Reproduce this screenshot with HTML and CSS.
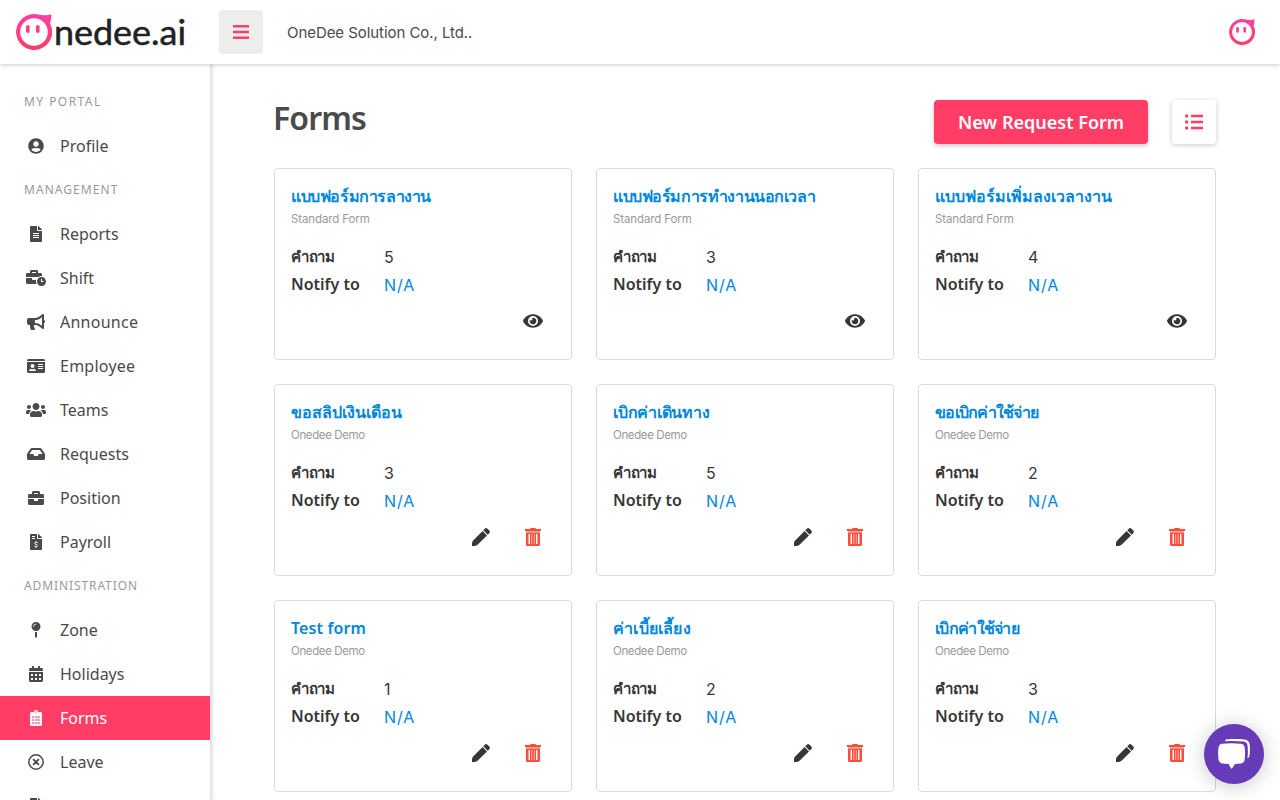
FILE: index.html
```html
<!DOCTYPE html>
<html lang="th">
<head>
<meta charset="utf-8">
<title>Forms</title>
<link rel="stylesheet" href="styles.css">
</head>
<body>
<svg class="defs" width="0" height="0">
<defs>
<linearGradient id="pink" x1="0" y1="0" x2="0" y2="1"><stop offset="0" stop-color="#ff3ea5"/><stop offset="1" stop-color="#ff3e62"/></linearGradient>
<symbol id="face" viewBox="0 0 36 36"><path fill="url(#pink)" fill-rule="evenodd" d="M18 0C22.500 0 25 1.300 28 1.300Q32 1.400 35.200.3Q35.600 5 34 9.500A18 18 0 1 1 18 0ZM18 4.200A13.800 13.800 0 1 0 18 31.800A13.800 13.800 0 1 0 18 4.200Z"/><rect x="10" y="11" width="3.600" height="8" rx="1.800" fill="#ff3e85"/><rect x="20" y="11" width="3.600" height="8" rx="1.800" fill="#ff3e85"/></symbol>
<symbol id="user" viewBox="0 0 496 512"><path d="M248 8C111 8 0 119 0 256s111 248 248 248 248-111 248-248S385 8 248 8zm0 96c48.600 0 88 39.400 88 88s-39.400 88-88 88-88-39.400-88-88 39.400-88 88-88zm0 344c-58.700 0-111.300-26.600-146.500-68.200 18.800-35.400 55.600-59.800 98.500-59.800 2.400 0 4.800.4 7.100 1.100 13 4.200 26.600 6.900 40.900 6.900 14.300 0 28-2.700 40.900-6.900 2.300-.7 4.700-1.100 7.100-1.100 42.900 0 79.700 24.400 98.500 59.800C359.300 421.400 306.700 448 248 448z"/></symbol>
<symbol id="file" viewBox="0 0 384 512"><path fill-rule="evenodd" d="M224 136V0H24C10.700 0 0 10.700 0 24v464c0 13.300 10.700 24 24 24h336c13.300 0 24-10.700 24-24V160H248c-13.200 0-24-10.800-24-24zM96 224h192v32H96zM96 288h192v32H96zM96 352h192v32H96zM384 121.900v6.100H256V0h6.100c6.400 0 12.500 2.500 17 7l97.900 98c4.500 4.500 7 10.600 7 16.900z"/></symbol>
<symbol id="shift" viewBox="0 0 640 512"><path d="M496 224c-79.590 0-144 64.410-144 144s64.410 144 144 144 144-64.410 144-144-64.410-144-144-144zm64 150.290c0 5.340-4.370 9.710-9.710 9.710h-60.570c-5.340 0-9.710-4.370-9.710-9.710v-76.570c0-5.340 4.370-9.710 9.710-9.710h12.570c5.340 0 9.710 4.370 9.710 9.710V352h38.290c5.340 0 9.710 4.370 9.710 9.710v12.580zM496 192c5.400 0 10.720.33 16 .81V144c0-25.600-22.400-48-48-48h-80V48c0-25.600-22.400-48-48-48H176c-25.600 0-48 22.400-48 48v48H48c-25.600 0-48 22.400-48 48v80h395.120c28.600-20.090 63.350-32 100.880-32zM320 96H192V64h128v32zm6.820 224H208c-8.840 0-16-7.160-16-16v-48H0v144c0 25.600 22.400 48 48 48h291.430C327.100 423.960 320 396.820 320 368c0-16.660 2.480-32.720 6.820-48z"/></symbol>
<symbol id="horn" viewBox="0 0 576 512"><path d="M576 240c0-23.630-12.950-44.040-32-55.120V32.010C544 23.260 537.020 0 512 0c-7.120 0-14.190 2.380-19.980 7.020l-85.030 68.030C364.280 109.190 310.660 128 256 128H64c-35.350 0-64 28.650-64 64v96c0 35.350 28.650 64 64 64h33.700c-1.390 10.480-2.180 21.140-2.180 32 0 39.770 9.260 77.350 25.560 110.940 5.190 10.690 16.520 17.060 28.400 17.060h74.280c26.050 0 41.690-29.840 25.900-50.560-16.400-21.520-26.150-48.360-26.150-77.440 0-11.110 1.620-21.790 4.410-32H256c54.660 0 108.280 18.810 150.980 52.950l85.030 68.030a32.023 32.023 0 0 0 19.980 7.020c24.920 0 32-22.780 32-32V295.130C563.050 284.040 576 263.630 576 240zm-96 141.420l-33.050-26.440C392.950 311.780 325.120 288 256 288v-96c69.120 0 136.950-23.780 190.950-66.980L480 98.580v282.840z"/></symbol>
<symbol id="card" viewBox="0 0 576 512"><path fill-rule="evenodd" d="M528 32H48C21.500 32 0 53.500 0 80v16h576V80c0-26.500-21.500-48-48-48zM0 432c0 26.500 21.500 48 48 48h480c26.500 0 48-21.500 48-48V128H0v304zM352 192h160v32H352zM352 256h160v32H352zM352 320h160v32H352zM176 192c35.300 0 64 28.700 64 64s-28.700 64-64 64-64-28.700-64-64 28.700-64 64-64zM67.100 396.200C75.500 370.500 99.600 352 128 352h8.200c12.300 5.100 25.700 8 39.800 8s27.600-2.900 39.800-8h8.200c28.400 0 52.500 18.500 60.900 44.200 3.200 9.900-5.200 19.800-15.600 19.800H82.700c-10.400 0-18.800-10-15.600-19.800z"/></symbol>
<symbol id="users" viewBox="0 0 640 512"><path d="M96 224c35.300 0 64-28.700 64-64s-28.700-64-64-64-64 28.700-64 64 28.700 64 64 64zm448 0c35.300 0 64-28.700 64-64s-28.700-64-64-64-64 28.700-64 64 28.700 64 64 64zm32 32h-64c-17.600 0-33.500 7.100-45.100 18.600 40.300 22.100 68.900 62 75.100 109.400h66c17.700 0 32-14.300 32-32v-32c0-35.300-28.700-64-64-64zm-256 0c61.900 0 112-50.100 112-112S381.900 32 320 32 208 82.100 208 144s50.100 112 112 112zm76.800 32h-8.300c-20.800 10-43.900 16-68.500 16s-47.600-6-68.500-16h-8.300C179.600 288 128 339.600 128 403.200V432c0 26.500 21.500 48 48 48h288c26.500 0 48-21.500 48-48v-28.800c0-63.600-51.600-115.200-115.200-115.200zm-223.700-13.400C161.500 263.100 145.600 256 128 256H64c-35.300 0-64 28.700-64 64v32c0 17.700 14.300 32 32 32h65.900c6.300-47.400 34.900-87.300 75.200-109.400z"/></symbol>
<symbol id="inbox" viewBox="0 0 576 512"><path d="M567.938 243.908L462.250 85.374A48.003 48.003 0 0 0 422.311 64H153.689a48 48 0 0 0-39.938 21.374L8.062 243.908A47.994 47.994 0 0 0 0 270.533V400c0 26.510 21.490 48 48 48h480c26.510 0 48-21.490 48-48V270.533a47.994 47.994 0 0 0-8.062-26.625zM162.252 128h251.497l85.333 128H376l-32 64H232l-32-64H76.918l85.334-128z"/></symbol>
<symbol id="brief" viewBox="0 0 512 512"><path d="M320 336c0 8.840-7.160 16-16 16h-96c-8.840 0-16-7.160-16-16v-48H0v144c0 25.600 22.400 48 48 48h416c25.600 0 48-22.400 48-48V288H320v48zm144-208h-80V80c0-25.600-22.400-48-48-48H176c-25.600 0-48 22.400-48 48v48H48c-25.600 0-48 22.400-48 48v80h512v-80c0-25.600-22.400-48-48-48zm-144 0H192V96h128v32z"/></symbol>
<symbol id="invoice" viewBox="0 0 384 512"><path fill-rule="evenodd" d="M224 136V0H24C10.700 0 0 10.700 0 24v464c0 13.300 10.700 24 24 24h336c13.300 0 24-10.700 24-24V160H248c-13.200 0-24-10.800-24-24zM64 64h96v32H64zM64 128h96v32H64zM384 121.900v6.100H256V0h6.100c6.400 0 12.500 2.500 17 7l97.900 98c4.500 4.500 7 10.600 7 16.900z"/><path fill="none" stroke="#fff" stroke-width="32" d="M192 224v32M192 416v32M244 280c-24-18-94-22-94 20 0 46 90 26 90 72 0 40-72 36-98 14"/></symbol>
<symbol id="pin" viewBox="0 0 288 512"><path d="M112 316.940v156.690l22.020 33.020c4.750 7.120 15.220 7.120 19.970 0L176 473.630V316.940c-10.390 1.920-21.060 3.060-32 3.060s-21.610-1.140-32-3.060zM144 0C64.470 0 0 64.470 0 144s64.470 144 144 144 144-64.470 144-144S223.530 0 144 0zm0 76c-37.500 0-68 30.500-68 68 0 6.620-5.380 12-12 12s-12-5.380-12-12c0-50.730 41.280-92 92-92 6.620 0 12 5.380 12 12s-5.380 12-12 12z"/></symbol>
<symbol id="cal" viewBox="0 0 448 512"><path fill-rule="evenodd" d="M0 160v-48c0-26 22-48 48-48h48V12q0-12 12-12h40q12 0 12 12v52h128V12q0-12 12-12h40q12 0 12 12v52h48c26 0 48 22 48 48v48zM0 192h448v272c0 26-22 48-48 48H48c-26 0-48-22-48-48zM64 256v64h64v-64zM192 256v64h64v-64zM320 256v64h64v-64zM64 384v64h64v-64zM192 384v64h64v-64zM320 384v64h64v-64z"/></symbol>
<symbol id="clip" viewBox="0 0 384 512"><path fill-rule="evenodd" d="M336 64h-80a64 64 0 0 0-128 0H48C21.500 64 0 85.500 0 112v352c0 26.500 21.500 48 48 48h288c26.500 0 48-21.500 48-48V112c0-26.500-21.500-48-48-48zM192 40a24 24 0 1 1 0 48 24 24 0 0 1 0-48zM72 200h48v48H72zM72 296h48v48H72zM72 392h48v48H72zM160 208h160v32H160zM160 304h160v32H160zM160 400h160v32H160z"/></symbol>
<symbol id="times" viewBox="0 0 16 16"><g fill="none" stroke="currentColor"><circle cx="8" cy="8" r="7.200" stroke-width="1.500"/><path stroke-width="1.900" d="M5.100 5.100l5.800 5.800M10.900 5.100l-5.800 5.800"/></g></symbol>
<symbol id="eye" viewBox="0 0 576 512"><path d="M572.520 241.400C518.290 135.590 410.930 64 288 64S57.680 135.640 3.480 241.410a32.350 32.350 0 0 0 0 29.190C57.710 376.410 165.070 448 288 448s230.320-71.640 284.520-177.410a32.350 32.350 0 0 0 0-29.190zM288 400a144 144 0 1 1 144-144 143.930 143.930 0 0 1-144 144zm0-240a95.310 95.310 0 0 0-25.310 3.790 47.850 47.850 0 0 1-66.900 66.900A95.780 95.780 0 1 0 288 160z"/></symbol>
<symbol id="pen" viewBox="0 0 18 18"><path d="M10.600 3L15 7.400L5.800 16.600Q4.400 18 2.800 18H0V15.200Q0 13.600 1.400 12.200ZM11.300 2.300L13 .6Q14.200-.4 15.500.7L17.300 2.500Q18.500 3.800 17.400 5L15.700 6.700Z"/></symbol>
<symbol id="trash" viewBox="0 0 16 18"><path fill="#ff9a8e" d="M1 3h14v2H1z"/><path fill="#ff4c3b" fill-rule="evenodd" d="M0 1h5l.6-1h4.800l.6 1h5v2H0zM1 5h14v11.500q0 1.500-1.500 1.500h-11Q1 18 1 16.500zM4 6v10h1V6zM11 6v10h1V6z"/><path fill="#ff9a8e" d="M3 6h1v10H3zM6 6h1.300v10H6zM8.700 6H10v10H8.700zM12 6h1v10h-1z"/></symbol>
</defs>
</svg>
<header class="topbar">
  <svg class="logo" viewBox="0 0 172 40"><use href="#face" x="0" y="2" width="36" height="36"/><text class="logo-text" x="38" y="33" textLength="132" lengthAdjust="spacingAndGlyphs">nedee.ai</text></svg>
  <button class="burger"><svg width="16" height="14" viewBox="0 0 16 14"><path d="M0 0h16v2.400H0zM0 5.800h16v2.400H0zM0 11.600h16V14H0z"/></svg></button>
  <span class="company">OneDee Solution Co., Ltd..</span>
  <svg class="avatar"><use href="#face"/></svg>
</header>
<div class="shell">
  <nav class="side">
    <h6 class="portal">MY PORTAL</h6>
    <a><svg><use href="#user"/></svg><span>Profile</span></a>
    <h6>MANAGEMENT</h6>
    <a><svg><use href="#file"/></svg><span>Reports</span></a>
    <a><svg><use href="#shift"/></svg><span>Shift</span></a>
    <a><svg><use href="#horn"/></svg><span class="wide">Announce</span></a>
    <a><svg><use href="#card"/></svg><span class="wide">Employee</span></a>
    <a><svg><use href="#users"/></svg><span>Teams</span></a>
    <a><svg><use href="#inbox"/></svg><span>Requests</span></a>
    <a><svg><use href="#brief"/></svg><span>Position</span></a>
    <a><svg><use href="#invoice"/></svg><span>Payroll</span></a>
    <h6 class="admin">ADMINISTRATION</h6>
    <a><svg><use href="#pin"/></svg><span>Zone</span></a>
    <a><svg><use href="#cal"/></svg><span>Holidays</span></a>
    <a class="active"><svg><use href="#clip"/></svg><span>Forms</span></a>
    <a><svg><use href="#times"/></svg><span>Leave</span></a>
    <a><svg><use href="#invoice"/></svg><span>Payroll Item</span></a>
  </nav>
  <main>
    <div class="head">
      <h1>Forms</h1>
      <button class="new">New Request Form</button>
      <button class="list"><svg width="18" height="16" viewBox="0 0 18 16"><circle cx="1.700" cy="2" r="1.700"/><circle cx="1.700" cy="8" r="1.700"/><circle cx="1.700" cy="14" r="1.700"/><path d="M6 .8h12v2.400H6zM6 6.800h12v2.400H6zM6 12.800h12v2.400H6z"/></svg></button>
    </div>
    <section class="grid">
      <article><h2><span class="t1">แบบฟอร์มการลางาน</span></h2><p>Standard Form</p><dl><dt class="th">คำถาม</dt><dd>5</dd><dt>Notify to</dt><dd class="na">N/A</dd></dl><footer><svg class="eye"><use href="#eye"/></svg></footer></article>
      <article><h2><span class="t2">แบบฟอร์มการทำงานนอกเวลา</span></h2><p>Standard Form</p><dl><dt class="th">คำถาม</dt><dd>3</dd><dt>Notify to</dt><dd class="na">N/A</dd></dl><footer><svg class="eye"><use href="#eye"/></svg></footer></article>
      <article><h2><span class="t3">แบบฟอร์มเพิ่มลงเวลางาน</span></h2><p>Standard Form</p><dl><dt class="th">คำถาม</dt><dd>4</dd><dt>Notify to</dt><dd class="na">N/A</dd></dl><footer><svg class="eye"><use href="#eye"/></svg></footer></article>
      <article><h2><span class="t4">ขอสลิปเงินเดือน</span></h2><p class="demo">Onedee Demo</p><dl><dt class="th">คำถาม</dt><dd>3</dd><dt>Notify to</dt><dd class="na">N/A</dd></dl><footer><svg class="pen"><use href="#pen"/></svg><svg class="trash"><use href="#trash"/></svg></footer></article>
      <article><h2><span class="t5">เบิกค่าเดินทาง</span></h2><p class="demo">Onedee Demo</p><dl><dt class="th">คำถาม</dt><dd>5</dd><dt>Notify to</dt><dd class="na">N/A</dd></dl><footer><svg class="pen"><use href="#pen"/></svg><svg class="trash"><use href="#trash"/></svg></footer></article>
      <article><h2><span class="t6">ขอเบิกค่าใช้จ่าย</span></h2><p class="demo">Onedee Demo</p><dl><dt class="th">คำถาม</dt><dd>2</dd><dt>Notify to</dt><dd class="na">N/A</dd></dl><footer><svg class="pen"><use href="#pen"/></svg><svg class="trash"><use href="#trash"/></svg></footer></article>
      <article><h2><span class="t7">Test form</span></h2><p class="demo">Onedee Demo</p><dl><dt class="th">คำถาม</dt><dd>1</dd><dt>Notify to</dt><dd class="na">N/A</dd></dl><footer><svg class="pen"><use href="#pen"/></svg><svg class="trash"><use href="#trash"/></svg></footer></article>
      <article><h2><span class="t8">ค่าเบี้ยเลี้ยง</span></h2><p class="demo">Onedee Demo</p><dl><dt class="th">คำถาม</dt><dd>2</dd><dt>Notify to</dt><dd class="na">N/A</dd></dl><footer><svg class="pen"><use href="#pen"/></svg><svg class="trash"><use href="#trash"/></svg></footer></article>
      <article><h2><span class="t9">เบิกค่าใช้จ่าย</span></h2><p class="demo">Onedee Demo</p><dl><dt class="th">คำถาม</dt><dd>3</dd><dt>Notify to</dt><dd class="na">N/A</dd></dl><footer><svg class="pen"><use href="#pen"/></svg><svg class="trash"><use href="#trash"/></svg></footer></article>
    </section>
  </main>
</div>
<button class="chat"><svg width="32" height="30" viewBox="0 0 32 30"><path fill="#fff" d="M7 2.200Q7 .6 8.500.3Q17-.6 26.500.4Q31 1 31.600 5Q32.300 10 31.600 16Q31.300 18 30 19.300L29.500 19Q30.300 11 29.400 6Q28.800 3 25 2.600Q16 1.600 7 2.200Z"/><path fill="#fff" d="M4 4.700Q13.500 3.600 23 4.700Q26 5 26.600 8Q27.500 14 26.600 21Q26.100 24 23 24.400L17 25L14.400 29Q13.600 30 12.800 29L10.600 25L4 24.400Q1.200 24 .6 21Q-.4 14 .6 8Q1.200 5 4 4.700Z"/></svg></button>
</body>
</html>
```
FILE: styles.css
```css
* { box-sizing: border-box; margin: 0; padding: 0; }
body { width: 1280px; height: 800px; overflow: hidden; background: #fff; color: #363636; font: 16px/24px "Noto Sans", "Open Sans", sans-serif; }
button { border: 0; display: flex; align-items: center; justify-content: center; }
svg { fill: currentColor; }
.defs { position: absolute; }
.topbar { position: relative; height: 64px; display: flex; align-items: center; padding: 0 25px 0 16px; background: #fff; box-shadow: 0 1px 4px rgba(0,0,0,.2); }
.logo { width: 172px; height: 40px; margin-right: 31px; overflow: visible; }
.logo-text { font: 34px Lato, sans-serif; fill: #222; stroke: #222; stroke-width: .5px; }
.burger { width: 44px; height: 44px; border-radius: 4px; background: #ededed; color: #ff3d65; }
.company { margin: 2px 0 0 24px; color: #4a4a4a; font: 15px/24px Inter, sans-serif; letter-spacing: -.06px; }
.avatar { width: 26px; height: 26px; margin-left: auto; }
.shell { display: flex; height: 736px; }
.side { width: 211px; flex: none; padding-top: 16px; overflow: hidden; border-right: 1px solid #e2e2e2; box-shadow: 1px 0 4px rgba(0,0,0,.16); }
.side h6 { height: 44px; padding-left: 24px; color: #999; font: 12px/44px "Noto Sans", sans-serif; letter-spacing: 1.050px; }
.side .portal { letter-spacing: 1.450px; }
.side .admin { letter-spacing: .9px; }
.side a { height: 44px; display: flex; align-items: center; gap: 14px; padding-left: 26px; color: #4a4a4a; }
.side .wide { letter-spacing: .25px; }
.side svg { width: 20px; height: 16px; }
.side .active { background: #ff3d65; color: #fff; }
main { flex: 1; padding: 36px 64px 0 63px; }
.head { height: 68px; display: flex; align-items: flex-start; }
h1 { flex: 1; color: #4a4a4a; font: 600 32px/36px "Noto Sans", sans-serif; letter-spacing: -.9px; text-indent: -1px; }
.new { width: 214px; height: 44px; border-radius: 4px; background: #ff3d65; color: #fff; font: 600 18px/24px "Noto Sans", sans-serif; box-shadow: 0 2px 4px rgba(0,0,0,.2); }
.list { width: 44px; height: 44px; margin-left: 24px; border-radius: 4px; background: #fff; color: #ff3d65; box-shadow: 0 1px 5px rgba(0,0,0,.22); }
.grid { display: grid; grid-template-columns: repeat(3, 298px); grid-auto-rows: 192px; gap: 24px; }
article { padding: 15px 16px; border: 1px solid #dbdbdb; border-radius: 4px; }
h2 { height: 24px; color: #0087db; font: 600 16px/24px "Noto Sans", sans-serif; white-space: nowrap; }
.t1 { letter-spacing: -.4px; }
.t2 { letter-spacing: -.42px; }
.t5 { letter-spacing: -.25px; }
.t6 { letter-spacing: -.75px; }
.t7 { letter-spacing: .12px; }
.t8 { letter-spacing: .2px; }
.t9 { letter-spacing: -.7px; }
article p { height: 20px; padding-top: 1px; color: #999; font: 11.500px/20px Inter, sans-serif; letter-spacing: -.12px; }
article .demo { letter-spacing: -.38px; }
dl { display: grid; grid-template-columns: 93px 1fr; grid-auto-rows: 28px; margin-top: 14px; line-height: 28px; }
dt { font-weight: 600; white-space: nowrap; }
.th { font-size: 15px; letter-spacing: -.4px; }
dd { font-family: Inter, sans-serif; padding-top: 1px; }
.na { color: #0087db; letter-spacing: .9px; }
article footer { height: 44px; display: flex; align-items: center; justify-content: flex-end; padding: 2px 14px 0 0; }
.eye, .pen, .trash { display: block; }
.eye { width: 20px; height: 18px; margin-right: -2px; }
.pen { width: 18px; height: 18px; }
.trash { width: 16px; height: 18px; margin-left: 35px; }
.chat { position: absolute; left: 1204px; top: 724px; width: 60px; height: 60px; border-radius: 50%; background: #673ab7; box-shadow: 0 2px 20px rgba(0,0,0,.22); }
```
